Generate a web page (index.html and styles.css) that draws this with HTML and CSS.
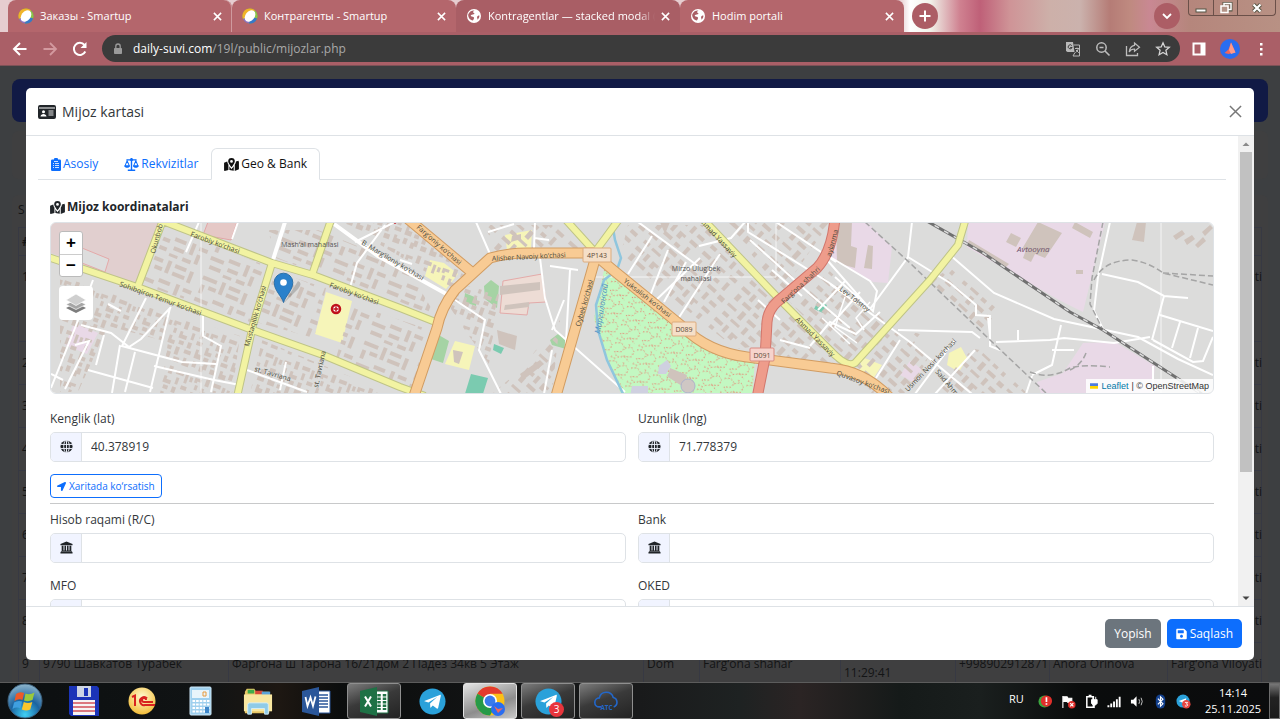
FILE: index.html
```html
<!DOCTYPE html>
<html lang="uz">
<head>
  <meta charset="UTF-8" />
  <meta name="viewport" content="width=device-width, initial-scale=1.0"/>
  <title>Mijoz kartasi</title>
  <link rel="stylesheet" href="styles.css">
</head>
<body>

  <!-- shared icons -->
  <svg class="sprite" aria-hidden="true">
    <symbol id="i-x" viewBox="0 0 10 10"><path d="M1 1l8 8M9 1l-8 8" stroke="currentColor" stroke-width="1.700" fill="none"/></symbol>
    <symbol id="i-smartup" viewBox="0 0 16 16">
      <circle cx="8" cy="8" r="7.500" fill="#6ab04a"/>
      <path d="M1 11A7.500 7.500 0 0 1 8 .5c3 0 4 1 5 2L8 8z" fill="#f0b429"/>
      <path d="M13 2.500a7.500 7.500 0 0 1 2 8L8 8z" fill="#8bc34a"/>
      <path d="M15 10.500A7.500 7.500 0 0 1 7 15.500L8 8z" fill="#3778c8"/>
      <path d="M7 15.500A7.500 7.500 0 0 1 1 11l7-3z" fill="#8f6fc0"/>
      <ellipse cx="8" cy="8" rx="4.600" ry="6.400" transform="rotate(38 8 8)" fill="#fff"/>
    </symbol>
    <symbol id="i-earth" viewBox="0 0 16 16">
      <circle cx="8" cy="8" r="7" fill="#fff"/>
      <path d="M8.500 2.500c-1 .5-2 1.500-1 2.200 1.300.4 1.200 1.300.2 1.600-1.200.5-2.700.3-3 1.500.2 1 1.800.7 2.800 1.200 1.200.7.3 2-.6 3.500-3-.6-5-3-4.700-6C3 4 5.500 2.300 8.500 2.500zM13.400 7.500c-.8.2-2 .2-2.300 1.300-.3 1.200.6 1.600.4 2.900 1.400-1.200 2-2.500 1.900-4.200z" fill="#a95e65"/>
    </symbol>
    <symbol id="i-globe" viewBox="0 0 14 14">
      <circle cx="7" cy="7" r="6.500" fill="#212529"/>
      <path d="M.5 4.800h13M.5 9.200h13M7 .5v13" stroke="#f1f4ff" fill="none"/>
      <ellipse cx="7" cy="7" rx="3" ry="6.700" stroke="#f1f4ff" fill="none"/>
    </symbol>
    <symbol id="i-bank" viewBox="0 0 14 14">
      <path d="M7 .5l6.500 2.800v1.200H.5V3.300zM1.800 5.200h2v5h1V5.200h1.700v5h1V5.200h1.700v5h1V5.200h2v5.600H1.800zM.5 12.200l.8-1.200h11.400l.8 1.200v1.300H.5z" fill="#212529"/>
    </symbol>
    <symbol id="i-map" viewBox="0 0 16 14">
      <path d="M0 5l3.400-1.300c.1 1.300.7 2.500 1.300 3.700V13L.7 14 0 13.500zM16 4.200V12l-4.500 2V7.400c.7-1.200 1.300-2.500 1.300-3.500L15.400 3zM5.700 9c.8 1.200 1.200 1.800 2.300 3 1.100-1.200 1.600-1.800 2.400-3v4.800l-4.700-1z" fill="currentColor"/>
      <path d="M8 0a3.600 3.600 0 0 1 3.600 3.600C11.600 5.500 9.300 8.500 8 10 6.700 8.500 4.400 5.500 4.400 3.600A3.600 3.600 0 0 1 8 0zm0 2.200a1.500 1.500 0 1 0 0 3 1.500 1.500 0 0 0 0-3z" fill="currentColor" fill-rule="evenodd"/>
    </symbol>
    <symbol id="i-telegram" viewBox="0 0 28 28">
      <circle cx="14" cy="14" r="13.500" fill="#2aa1da"/>
      <path d="M5.500 13.500L21.500 7.200c.8-.3 1.300.2 1.100 1.100l-2.700 12.300c-.2.9-.8 1-1.500.6l-4.100-3-2 2c-.3.3-.5.3-.6-.2l-.2-4 7.300-6.600-9 5.700-4.200-1.300z" fill="#fff"/>
    </symbol>
  </svg>

  <header class="browser">
    <div class="tabstrip">
      <div class="btab">
        <svg class="favicon"><use href="#i-smartup"/></svg>
        <button class="btab-title">Заказы - Smartup</button>
        <button class="btab-close" aria-label="Close"><svg><use href="#i-x"/></svg></button>
      </div>
      <div class="btab">
        <svg class="favicon"><use href="#i-smartup"/></svg>
        <button class="btab-title">Контрагенты - Smartup</button>
        <button class="btab-close" aria-label="Close"><svg><use href="#i-x"/></svg></button>
      </div>
      <div class="btab current">
        <svg class="favicon"><use href="#i-earth"/></svg>
        <button class="btab-title">Kontragentlar — stacked modal (</button>
        <button class="btab-close" aria-label="Close"><svg><use href="#i-x"/></svg></button>
      </div>
      <div class="btab">
        <svg class="favicon"><use href="#i-earth"/></svg>
        <button class="btab-title">Hodim portali</button>
        <button class="btab-close" aria-label="Close"><svg><use href="#i-x"/></svg></button>
      </div>
      <button class="round" aria-label="New tab"><svg viewBox="0 0 12 12"><path d="M6 .5v11M.5 6h11" stroke="#fff" stroke-width="2"/></svg></button>
      <button class="round tab-search" aria-label="Search tabs"><svg viewBox="0 0 12 12"><path d="M2 4l4 4 4-4" stroke="#fff" stroke-width="1.800" fill="none"/></svg></button>
      <div class="winbtns">
        <button aria-label="Minimize"><svg viewBox="0 0 14 12"><rect x="2" y="7" width="10" height="3" fill="#fff" stroke="#554"/></svg></button>
        <button aria-label="Restore"><svg viewBox="0 0 14 12"><path d="M5 1h7v7H5z" fill="none" stroke="#554" stroke-width="3"/><path d="M5 1.500h7v6H5z" fill="none" stroke="#fff" stroke-width="1.500"/><path d="M2 4h7v6.500H2z" fill="#b49387" stroke="#fff" stroke-width="1.500"/></svg></button>
        <button class="wide" aria-label="Close window"><svg viewBox="0 0 14 12"><path d="M3.500 2.500l7 7M10.500 2.500l-7 7" stroke="#554" stroke-width="4"/><path d="M3.500 2.500l7 7M10.500 2.500l-7 7" stroke="#fff" stroke-width="2.200"/></svg></button>
      </div>
    </div>

    <div class="toolbar">
      <button class="nav" aria-label="Back"><svg viewBox="0 0 16 16"><path d="M14.500 8H2.500M8 2L2 8l6 6" stroke="#fff" stroke-width="2" fill="none"/></svg></button>
      <button class="nav" aria-label="Forward"><svg viewBox="0 0 16 16"><path d="M1.500 8h12M8 2l6 6-6 6" stroke="#d3999f" stroke-width="1.800" fill="none"/></svg></button>
      <button class="nav" aria-label="Reload"><svg viewBox="0 0 16 16"><path d="M13.300 10.500A6 6 0 1 1 12.500 4" stroke="#fff" stroke-width="2" fill="none"/><path d="M14.500 1v6h-6z" fill="#fff"/></svg></button>
      <div class="address">
        <svg class="lock" viewBox="0 0 10 12"><path d="M1.500 5.500h7v5h-7z" fill="#9a9a9a" stroke="#9a9a9a"/><path d="M2.800 5V3.200a2.200 2.200 0 0 1 4.400 0V5" fill="none" stroke="#9a9a9a" stroke-width="1.300"/></svg>
        <div class="url" role="textbox" aria-label="Address"><b>daily-suvi.com</b>/19l/public/mijozlar.php</div>
        <button aria-label="Translate"><svg viewBox="0 0 16 16"><path d="M1 1h7l1.500 10H2.500L1 10z" fill="#b9b9b9"/><path d="M8.500 4H14.500v11H8l2-3.500" fill="none" stroke="#b9b9b9"/><path d="M10 7.500h4M12 6.500v1M13.300 7.500c-.4 2-1.500 3.300-2.800 4M11 9l2.800 2.800" stroke="#b9b9b9" fill="none"/><path d="M6.800 4.600a2 2 0 1 0 .3 1.900H5.200" stroke="#3b3b3b" fill="none"/></svg></button>
        <button aria-label="Zoom"><svg viewBox="0 0 16 16"><circle cx="6.500" cy="6.500" r="4.700" fill="none" stroke="#bdbdbd" stroke-width="1.500"/><path d="M10 10l4.500 4.500M4.500 6.500h4" stroke="#bdbdbd" stroke-width="1.600"/></svg></button>
        <button aria-label="Share"><svg viewBox="0 0 16 16"><path d="M1.500 5v9.500h11V12" fill="none" stroke="#bdbdbd" stroke-width="1.300"/><path d="M9.500 2l5 4.300-5 4V8C7 8 5.200 9 4.200 11 4.500 7.500 6.500 4.800 9.500 4.300z" fill="none" stroke="#bdbdbd" stroke-width="1.200"/></svg></button>
        <button aria-label="Bookmark"><svg viewBox="0 0 16 16"><path d="M8 1.800l1.800 4.100 4.500.4-3.400 3 1 4.400L8 11.400l-3.900 2.300 1-4.400-3.400-3 4.500-.4z" fill="none" stroke="#d5d5d5" stroke-width="1.300"/></svg></button>
      </div>
      <button class="ext" aria-label="Side panel"><svg viewBox="0 0 14 14"><path d="M.5.500h13v13H.5zM2.500 2.500v9h6v-9z" fill="#fff" fill-rule="evenodd"/></svg></button>
      <button class="ext avatar" aria-label="Profile"><svg viewBox="0 0 20 20"><circle cx="10" cy="10" r="10" fill="#2a6df0"/><path d="M11 3.500l4.500 10-4 .5-3 1-4-1 4-3.500z" fill="#f2665a"/><path d="M11 3.500L9 11l2 4 4.500-1.500z" fill="#ff9a8a"/></svg></button>
      <button class="ext" aria-label="Menu"><svg viewBox="0 0 14 14"><path d="M6 1h2.500v2.500H6zM6 6h2.500v2.500H6zM6 11h2.500v2.500H6z" fill="#fff"/></svg></button>
    </div>
  </header>

  <main class="page">
    <div class="navbar"></div>
    <div class="filters"></div>
    <div class="list">
      <p>S</p>
      <table>
        <colgroup><col class="c-n"><col class="c-name"><col class="c-addr"><col class="c-type"><col class="c-city"><col class="c-date"><col class="c-phone"><col class="c-agent"><col></colgroup>
        <thead><tr><th>#</th><th></th><th></th><th></th><th></th><th></th><th></th><th></th><th></th></tr></thead>
        <tbody>
          <tr class="tall"><td>1</td><td></td><td></td><td></td><td></td><td></td><td></td><td></td><td>Farg‘ona Viloyati</td></tr>
          <tr><td>2</td><td></td><td></td><td></td><td></td><td></td><td></td><td></td><td>Farg‘ona Viloyati</td></tr>
          <tr><td>3</td><td></td><td></td><td></td><td></td><td></td><td></td><td></td><td>Farg‘ona Viloyati</td></tr>
          <tr><td>4</td><td></td><td></td><td></td><td></td><td></td><td></td><td></td><td>Farg‘ona Viloyati</td></tr>
          <tr><td>5</td><td></td><td></td><td></td><td></td><td></td><td></td><td></td><td>Farg‘ona Viloyati</td></tr>
          <tr><td>6</td><td></td><td></td><td></td><td></td><td></td><td></td><td></td><td>Farg‘ona Viloyati</td></tr>
          <tr><td>7</td><td></td><td></td><td></td><td></td><td></td><td></td><td></td><td>Farg‘ona Viloyati</td></tr>
          <tr><td>8</td><td></td><td></td><td></td><td></td><td></td><td></td><td></td><td>Farg‘ona Viloyati</td></tr>
          <tr><td>9</td><td>9790 Шавкатов Турабек</td><td>Фаргона ш Тарона 16/21дом 2 Падез 34кв 5 Этаж</td><td>Dom</td><td>Farg‘ona shahar</td><td>2025-11-25 11:29:41</td><td>+998902912871</td><td>Anora Orinova</td><td>Farg‘ona Viloyati</td></tr>
        </tbody>
      </table>
    </div>

    <div class="overlay">
      <section class="modal" role="dialog" aria-labelledby="modal-title">
        <div class="modal-header">
          <svg class="id-card" viewBox="0 0 18 14"><path d="M2 0h14a2 2 0 0 1 2 2v10a2 2 0 0 1-2 2H2a2 2 0 0 1-2-2V2a2 2 0 0 1 2-2zM1 2.500v1h16v-1z" fill="#212529" fill-rule="evenodd"/><circle cx="5.500" cy="6.700" r="1.500" fill="#fff"/><path d="M2.500 11.500c.2-3.500 5.800-3.500 6 0z" fill="#fff"/><path d="M10.500 6h5M10.500 8h5M10.500 10h5" stroke="#fff" stroke-width=".9"/></svg>
          <h1 id="modal-title">Mijoz kartasi</h1>
          <button class="close" aria-label="Yopish"><svg viewBox="0 0 14 14"><path d="M1 1l12 12M13 1L1 13" stroke="#777" stroke-width="1.600"/></svg></button>
        </div>

        <div class="modal-body">
          <div class="content">
            <nav class="tabs">
              <a href="#asosiy"><svg class="ic-clip" viewBox="0 0 10 13"><path d="M1.300 1.500H3a2 2 0 0 1 4 0h1.700A1.300 1.300 0 0 1 10 2.800v8.900A1.300 1.300 0 0 1 8.700 13H1.300A1.300 1.300 0 0 1 0 11.700V2.800a1.300 1.300 0 0 1 1.300-1.300z" fill="currentColor"/><path d="M2 5.500h1M4 5.500h4M2 7.500h1M4 7.500h4M2 9.500h1M4 9.500h4M3 3.500h4" stroke="#fff" stroke-width=".8"/></svg>Asosiy</a>
              <a href="#rekvizitlar"><svg class="ic-wide" viewBox="0 0 16 14"><path d="M8 0v13M2.500 2h11M4 13.200h8" stroke="currentColor" stroke-width="1.500"/><circle cx="8" cy="2" r="1.600" fill="currentColor"/><path d="M3.300 3L1 8.500h4.700zM12.700 3l-2.400 5.500H15z" fill="none" stroke="currentColor" stroke-width="1.100"/><path d="M.3 8h6c0 3.500-6 3.500-6 0zM9.700 8h6c0 3.500-6 3.500-6 0z" fill="currentColor"/></svg>Rekvizitlar</a>
              <a href="#geo" class="active"><svg class="ic-wide"><use href="#i-map"/></svg>Geo &amp; Bank</a>
            </nav>

            <form class="pane" id="geo">
              <h2><svg class="ic-wide"><use href="#i-map"/></svg>Mijoz koordinatalari</h2>

              <div class="map">
                <svg class="tiles" viewBox="51 222 1162 172" preserveAspectRatio="xMidYMid slice" aria-label="Farg‘ona">
                  <defs>
                    <pattern id="blocks" width="58" height="44" patternUnits="userSpaceOnUse" patternTransform="rotate(22)">
                      <path class="house" d="M2 3h15v4H2zM22 2h4v13h-4zM30 3h12v4H30zM46 4h4v12h-4zM3 12h4v9H3zM11 11h8v4h-8zM30 11h13v4H30zM2 26h14v4H2zM20 22h12v4H20zM38 21h4v12h-4zM46 22h9v4h-9zM4 35h12v4H4zM22 31h11v4H22zM20 39h9v3h-9zM46 30h4v10h-4zM34 38h9v4h-9z"/>
                    </pattern>
                    <pattern id="houses" width="47" height="39" patternUnits="userSpaceOnUse" patternTransform="rotate(-70)">
                      <path class="house" d="M1 1h6v3h3v4H4V5H1zM12 2h4v5h-4zM18 1h8v3h-4v4h-4zM29 3h5v3h-5zM36 1h5v7h-3V4h-2zM2 12h5v6H2zM9 11h8v4H9zM20 12h4v5h-4zM26 10h7v3h-3v5h-4zM36 12h8v4h-8zM1 22h8v3H6v4H1zM13 20h4v7h-4zM19 21h6v4h-6zM28 22h7v3h-7zM38 20h4v8h-4zM3 32h6v4H3zM12 31h9v3h-4v4h-5zM25 29h4v6h-4zM32 30h9v3h-9zM35 35h5v3h-5z"/>
                    </pattern>
                    <pattern id="yards" width="53" height="41" patternUnits="userSpaceOnUse" patternTransform="rotate(42)">
                      <path class="house" d="M2 2h10v4H2zM15 1h4v8h-4zM24 3h8v3h-3v4h-5zM38 2h9v4h-9zM3 11h5v7H3zM13 13h10v4H13zM28 14h6v4h-6zM40 10h4v9h-4zM2 24h11v3H2zM18 21h5v9h-5zM28 23h10v4H28zM43 24h7v5h-7zM4 33h7v4H4zM15 34h11v3H15zM31 31h4v8h-4zM40 34h8v4h-8z"/>
                    </pattern>
                    <pattern id="paths" width="23" height="19" patternUnits="userSpaceOnUse" patternTransform="rotate(18)">
                      <path d="M1 3l6-2 5 4-3 5-6 1M12 5l6-3 4 4-2 6-7 1M3 11l4 5 7-3 6 4M1 17l5 1M15 0l1 3" fill="none" stroke="#e8806f" stroke-width="1" stroke-dasharray="1.500 2"/>
                    </pattern>
                  </defs>
                  <rect x="40" y="212" width="1190" height="192" fill="#dcdcdb"/>

                  <!-- land use -->
                  <g>
                    <path d="M40 222h122l-24 63-98-36z" fill="#e1cfcf"/>
                    <path d="M82 248l27 11-4 13-23-9z" fill="#ddd" stroke="#e4a9a9"/>
                    <path d="M208 222h29l-6 18-28-5z" fill="#e5c8c6" stroke="#e2a5a5"/>
                    <path d="M74 323l24 10-11 21-22-9zM968 222h137l-22 90-24-12-92-53zM830 222h37l25 25-4 36-15-1-43-25zM1037 382l26-9 20-30 32-1 40 24-3 30h-110zM900 375l10-14 12 8-9 13z" fill="#e9d9e7"/>
                    <path d="M326 292l26 9-10 42-27-9zM430 260l14 3 14 11-12 15-21-13zM505 235l27-5-1 18-24 2zM455 341l20 5-6 24-24-6zM862 357l20 8-9 14-14-6zM949 353l12-6 6 11-8 14-12-7z" fill="#f6f5b9"/>
                    <path d="M503 281l39-7 4 28-17 1-2 12-27-2z" fill="#eddcd5" stroke="#e3aaa9"/>
                    <path d="M604 270l12 4 66 54 35 26 38 7-3 36H622l-14-38-14-40z" fill="#c3f8c2"/>
                    <path d="M604 270l12 4 66 54 35 26 38 7-3 36H622l-14-38-14-40z" fill="url(#paths)"/>
                    <path d="M484 286l7-6 8 6-2 22-12-9zM465 293l12 5-1 8-12-4zM437 334l12 7-6 22-12-4zM550 340l8-6 8 5v10l-14-4z" fill="#a5d3a4"/>
                    <path d="M471 374l17 4-6 19h-18zM494 344l10 4-3 6-8-4zM818 301l9 4-4 8-9-4z" fill="#7bcbb0"/>
                  </g>

                  <!-- buildings -->
                  <g>
                    <path d="M168 228l104 40-22 54-108-38z" fill="url(#blocks)"/>
                    <path d="M268 230l50 0 88 36 30 50-160-58zM276 272l50 16-12 50-58-16zM352 304l78 26-16 58-78-30z" fill="url(#blocks)"/>
                    <path d="M60 276l180 60-8 58H160l8-52-60-16-30 66H60z" fill="url(#houses)"/>
                    <path d="M262 340l130 54H250zM345 222h60l64 54-16 12-108-64zM445 300l14-16 40 10-10 70-20-28z" fill="url(#houses)"/>
                    <path d="M485 225h70l30 26-90 0zM628 225h80l66 74-8 46-30 4-116-92zM725 222h105l-48 70z" fill="url(#yards)"/>
                    <path d="M772 320l20-10 60 60-50-6-36-6zM788 300l36-34 100 90-54 34-24-30z" fill="url(#yards)"/>
                    <path d="M905 330l24 26-20 38H870l50-60zM950 268l46 40-10 24-60-48zM980 350l48 44h-90l30-46zM520 370l40-50-8 74h-60z" fill="url(#yards)"/>
                    <path class="house" d="M1038 222l24 11-17 25-10-4-4 8-8-4 3-8-4-1zM1011 233l10 5-5 9-10-5zM1075 222l18 10-3 6-18-10zM836 222h16l-1 24 6 2-2 20-18-5zM868 245l5 1-1 23-8-1zM969 240l40 24-4 4-38-23zM1076 270h7v4h-7zM1137 222h9l-2 20-12-2zM497 330l20 6-2 14-16-6zM500 286l40-4v8l-40 5zM505 305l24-3v5l-25 3zM520 374l20-14 4 4-21 16zM670 370l17 6-4 10-16-10zM660 222h10l-5 12zM1173 236l9-6 3 4-9 6zM1184 240l8-5 3 4-8 6zM1195 245l8-8 3 4-8 7zM1202 232l8-7 3 3-8 8z"/>
                    <path class="house" d="M512 236l9-2v5l-10 3zM453 350l10 2-4 12-5-2z"/>
                  </g>

                  <!-- minor streets -->
                  <g fill="none" stroke="#fff" stroke-width="2">
                    <path d="M201 222v172M1161 222v172M585 277h191v-55" stroke-width="1" stroke="#f5f5f5"/>
                    <path d="M285 222l-13 41" stroke-width="4"/>
                    <path d="M238 222l-6 17M199 222l-13 30M93 280l-18 48-24 60M108 304l13 7M81 325l30 8 18 14 12-8 30-32M146 298l-24 48 60 16 34 2M170 308l-20 84M203 310v26l18 10-10 46M75 345l14-4-24 48M88 370l65 18M104 335l-8 30M154 366l60 14 26 5M51 374l12 6M120 345l-8 48M135 352l-10 40M247 370l60 22M286 362l-6 28M385 225l-28 38-8 28M395 222l-40 20"/>
                    <path d="M334 224l44 32 72 40" stroke-width="4"/>
                    <path d="M476 222l14 32M400 260l12 4M535 222l-1 26M488 232l26-8M534 238l15 2M540 258l5 40 10 32 70 62M455 300l30 20-6 30 22 44M570 270l-5 90M550 266l28 4M564 300l-12 30M552 350l-8 44"/>
                    <path d="M638 222l60 44M652 236l-24 38M668 250l-18 46M686 262l-22 40M745 222l-14 16-32 8M720 254l-44 68M700 258l-46 44M750 240l60 54 40 34M776 222l60 40M748 222v10l80 50 20 14"/>
                    <path d="M830 257l40 24 7 10-4 20-38-34M912 222l-4 35-38 52-42-48M908 257l42 26 26 22 0 10 14 1v30l10 4M950 255l44 38 60 26 84 18 40 22 35 16M830 284l80 58 62 52M860 292l-30 34M846 280l-28 30M880 312l-24 22-26-12-20 24M898 330l74 2 8 6M955 340l-40 54M975 350l-40 44M900 340l-24 38M996 342l54-2 14-2 50 5 36-6M1061 325l-9 40-20 10M1052 350h22M1110 222l-12 55-4 34 10 20M1102 274l36 8 26 14 24 2M1164 296l-12 44M1160 315l53 16M1180 322l-8 26M1198 328l-8 30M1153 340l40 22 10-1 10-24M1153 366v28M1032 376l-6 18M780 340l30 8M758 300l22 20M772 270l30 26M990 336l-2-18M1018 340v-10" />
                    <path d="M845 297l-10 30 22 16M870 302l-14 16 8 12M822 318l28 26" stroke-width="1.500"/>
                  </g>

                  <!-- water and rail -->
                  <path d="M611 216l4 24 6 18-4 12-13 10-8 25 2 25 9 30 18 38" fill="none" stroke="#8fc6de" stroke-width="2.500"/>
                  <g fill="none" stroke="#a5a5a5" stroke-width="1.500">
                    <path d="M865 222l45 41 80 77 57 54M1103 222l-11 56-2 26 13 26M1094 280q10-20 38-20 16 2 31 13l50 12M1163 273l50 3M1030 372q20 8 40-4 12-4 40-1M1070 370q12-6 16-17" stroke-dasharray="6 3"/>
                    <path d="M925 220l58 33 87 59 33 18 77 50 25 16" stroke="#707070" stroke-width="3"/>
                    <path d="M925 220l58 33 87 59 33 18 77 50 25 16" stroke="#ddd" stroke-width="1.500" stroke-dasharray="5 6"/>
                  </g>

                  <!-- main roads: casing then fill -->
                  <g fill="none" stroke-linejoin="round">
                    <g stroke="#bfc487" stroke-width="8">
                      <path d="M45 256l95 32 107 40 76 27 77 32 25 9M160 220l112 43 41 12 87 33 38 15M163 220l-25 66M331 220l-19 55M272 263l-19 62-16 72M566 220l29 32M620 218l-25 34M702 218l78 82 50 50q17 18 25 13l75-83 28-35 8-27"/>
                    </g>
                    <g stroke="#f2f3a2" stroke-width="6">
                      <path d="M45 256l95 32 107 40 76 27 77 32 25 9M160 220l112 43 41 12 87 33 38 15M163 220l-25 66M331 220l-19 55M272 263l-19 62-16 72M566 220l29 32M620 218l-25 34M702 218l78 82 50 50q17 18 25 13l75-83 28-35 8-27"/>
                    </g>
                    <path d="M408 219l67 56M414 396l23-68q4-20 18-38l35-32q18-5 37-5h66l20 17 70 57q25 25 64 30l83 11q35 3 60 30M596 256l-40 140" stroke="#d19c62" stroke-width="11"/>
                    <path d="M408 219l67 56M414 396l23-68q4-20 18-38l35-32q18-5 37-5h66l20 17 70 57q25 25 64 30l83 11q35 3 60 30M596 256l-40 140" stroke="#f8cb94" stroke-width="9"/>
                    <path d="M757 398l8-40 2-36q1-12 10-20l40-34q15-16 18-50" stroke="#d1766c" stroke-width="11"/>
                    <path d="M757 398l8-40 2-36q1-12 10-20l40-34q15-16 18-50" stroke="#ee9c8b" stroke-width="9"/>
                  </g>

                  <!-- park buildings -->
                  <path d="M659 366l8-6 4 6-5 8-8 0zM632 386h16v10h-18z" fill="#cfd0e0"/>
                  <path class="house" d="M670 368l17 7-5 11-14-9z"/>
                  <circle cx="688" cy="386" r="7" fill="#cfc7c4" stroke="#aeb2cc"/>

                  <!-- labels -->
                  <g class="lbl">
                    <text transform="translate(155 254) rotate(-75)">Okunbob</text>
                    <text transform="translate(190 236) rotate(20)">Farobiy ko‘chasi</text>
                    <text transform="translate(329 287) rotate(20)">Farobiy ko‘chasi</text>
                    <text transform="translate(119 286) rotate(20)">Sohibqiron Temur ko‘chasi</text>
                    <text transform="translate(249 347) rotate(-74)">Mustaqillik ko‘chasi</text>
                    <text transform="translate(361 244) rotate(31)">B. Marg‘iloniy ko‘chasi</text>
                    <text transform="translate(254 371) rotate(16)">st. Tavriana</text>
                    <text transform="translate(318 388) rotate(-78)">st. Tavriana</text>
                    <text transform="translate(416 228) rotate(41)">Farg‘oniy ko‘chasi</text>
                    <text transform="translate(492 261) rotate(-3)">Alisher Navoiy ko‘chasi</text>
                    <text transform="translate(580 327) rotate(-74)">Oybek ko‘chasi</text>
                    <text transform="translate(623 282) rotate(38)">Yuksalish ko‘chasi</text>
                    <text transform="translate(701 223) rotate(47)">hmad Yassaviy</text>
                    <text transform="translate(795 320) rotate(45)">Ahmad Yassaviy</text>
                    <text transform="translate(784 304) rotate(-43)">Farg‘ona shahri</text>
                    <text transform="translate(831 257) rotate(-75)">aylanma</text>
                    <text transform="translate(839 290) rotate(38)">Lev Tolstoy</text>
                    <text transform="translate(836 375) rotate(20)">Quvasoy ko‘chasi</text>
                    <text transform="translate(908 392) rotate(-46)">Usmon Nosir ko‘chasi</text>
                    <text transform="translate(935 372) rotate(50)">Said Ahmad</text>
                    <text class="place" x="281" y="247">Mash‘al mahallasi</text>
                    <text class="place" text-anchor="middle" x="696" y="271">Mirzo Ulug‘bek</text>
                    <text class="place" text-anchor="middle" x="696" y="281">mahallasi</text>
                    <text class="factory" x="1017" y="252">Avtooyna</text>
                    <text class="river" transform="translate(600 334) rotate(-81)">Маргилонсай</text>
                  </g>
                  <g class="shield">
                    <rect x="583" y="248" width="28" height="14" rx="1" fill="#f5dfc8" stroke="#dcab7c"/>
                    <text x="597" y="258">4P143</text>
                    <rect x="672" y="322" width="24" height="14" rx="1" fill="#f5dfc8" stroke="#dcab7c"/>
                    <text x="684" y="332">D089</text>
                    <rect x="750" y="348" width="24" height="13" rx="1" fill="#f6d3cc" stroke="#d98a80"/>
                    <text x="762" y="358">D091</text>
                  </g>
                  <circle cx="336" cy="309" r="4" fill="#fff" stroke="#c0111b" stroke-width="2.500"/>
                  <path d="M336 306.500v5M333.500 309h5" stroke="#c0111b" stroke-width="1.500"/>
                  <path d="M392 222h6l-3 2z" fill="#c0111b"/>

                  <!-- marker -->
                  <path d="M284 303l14-14q5-6 0-8z" fill="#000" opacity=".18"/>
                  <path d="M283.500 302.500c-1.500-6-9.300-12-9.300-20a9.300 9.300 0 0 1 18.600 0c0 8-7.800 14-9.300 20z" fill="#2a81cb" stroke="#2a6fa8"/>
                  <circle cx="283.500" cy="282.500" r="3.300" fill="#fff"/>
                </svg>

                <div class="map-controls">
                  <div class="zoom">
                    <button type="button" aria-label="Zoom in">+</button>
                    <button type="button" aria-label="Zoom out">−</button>
                  </div>
                  <button type="button" class="layers" aria-label="Layers"><svg viewBox="0 0 22 22"><path d="M11 11l10 5-10 5-10-5z" fill="#7d7d7d"/><path d="M11 7.500l10 5-10 5-10-5z" fill="#a5a5a5" stroke="#fff" stroke-width=".7"/><path d="M11 2l10 6-10 5.500L1 8z" fill="#cfcfcf" stroke="#fff" stroke-width=".7"/></svg></button>
                </div>
                <div class="attribution"><svg viewBox="0 0 12 8"><path fill="#4c7be1" d="M0 0h12v4H0z"/><path fill="#ffd500" d="M0 4h12v4H0z"/></svg><a href="#leaflet">Leaflet</a> | © OpenStreetMap</div>
              </div>

              <div class="grid">
                <div class="field">
                  <label for="lat">Kenglik (lat)</label>
                  <div class="group"><span><svg><use href="#i-globe"/></svg></span><input id="lat" type="text" value="40.378919"></div>
                </div>
                <div class="field">
                  <label for="lng">Uzunlik (lng)</label>
                  <div class="group"><span><svg><use href="#i-globe"/></svg></span><input id="lng" type="text" value="71.778379"></div>
                </div>
              </div>

              <button type="button" class="btn-outline"><svg viewBox="0 0 512 512"><path fill="currentColor" d="M444.520 3.520L28.740 195.420c-47.970 22.390-31.980 92.750 19.190 92.750h175.910v175.910c0 51.170 70.360 67.170 92.750 19.190l191.900-415.780c15.990-38.390-25.590-79.970-63.970-63.970z"/></svg>Xaritada ko‘rsatish</button>
              <hr>

              <div class="grid bank">
                <div class="field">
                  <label for="rc">Hisob raqami (R/C)</label>
                  <div class="group"><span><svg><use href="#i-bank"/></svg></span><input id="rc" type="text"></div>
                </div>
                <div class="field">
                  <label for="bank">Bank</label>
                  <div class="group"><span><svg><use href="#i-bank"/></svg></span><input id="bank" type="text"></div>
                </div>
                <div class="field">
                  <label for="mfo">MFO</label>
                  <div class="group"><span></span><input id="mfo" type="text"></div>
                </div>
                <div class="field">
                  <label for="oked">OKED</label>
                  <div class="group"><span></span><input id="oked" type="text"></div>
                </div>
              </div>
            </form>
          </div>

          <div class="scrollbar" aria-hidden="true">
            <svg viewBox="0 0 16 16"><path d="M4.500 10L8 6.500l3.500 3.500z" fill="#8a8a8a"/></svg>
            <div class="track"><div class="thumb"></div></div>
            <svg viewBox="0 0 16 16"><path d="M4.500 6.500L8 10l3.500-3.500z" fill="#444"/></svg>
          </div>
        </div>

        <div class="modal-footer">
          <button class="btn gray">Yopish</button>
          <button class="btn blue"><svg viewBox="0 0 448 512"><path fill="#fff" d="M433.941 129.941l-83.882-83.882A48 48 0 0 0 316.118 32H48C21.490 32 0 53.490 0 80v352c0 26.510 21.490 48 48 48h352c26.510 0 48-21.490 48-48V163.882a48 48 0 0 0-14.059-33.941zM224 416c-35.346 0-64-28.654-64-64 0-35.346 28.654-64 64-64s64 28.654 64 64c0 35.346-28.654 64-64 64zm96-304.520V212c0 6.627-5.373 12-12 12H76c-6.627 0-12-5.373-12-12V108c0-6.627 5.373-12 12-12h228.520c3.183 0 6.235 1.264 8.485 3.515l3.480 3.480A11.996 11.996 0 0 1 320 111.480z"/></svg>Saqlash</button>
        </div>
      </section>
    </div>
  </main>

  <footer class="taskbar">
    <button class="start" aria-label="Start"><svg viewBox="0 0 36 36">
      <defs><radialGradient id="orb" cx=".5" cy=".9" r=".9"><stop offset="0" stop-color="#3fd0f5"/><stop offset=".5" stop-color="#1b63a0"/><stop offset="1" stop-color="#8fb6cc"/></radialGradient></defs>
      <circle cx="18" cy="18" r="17" fill="url(#orb)" stroke="#3a5f7c"/>
      <path d="M9 11q4-3 8-1l-1.500 7q-4-2-8 1z" fill="#ee5a28"/>
      <path d="M18.500 10.500q4 2 9-1l-2 7.500q-4 2-8.500.5z" fill="#9bc93c"/>
      <path d="M7 19.500q4-2.500 8-1l-1.500 7q-4-2-8 .5z" fill="#3f9fe0"/>
      <path d="M16.800 19q4 2 8.500 0l-2 7.500q-4 2-8.500 0z" fill="#fcc62c"/>
    </svg></button>

    <button class="task" aria-label="Total Commander"><svg viewBox="0 0 30 30"><path d="M0 0h28l2 2v28H2l-2-2z" fill="#1b34b8"/><path d="M8 0h14v11H8z" fill="#cdd5e4"/><path d="M15 2h4v8h-4z" fill="#1b34b8"/><path d="M4 14h22v15H4z" fill="#f6f4f4"/><path d="M4 17h22M4 21h22M4 25h22" stroke="#d2505a" stroke-width="1.300"/></svg></button>
    <button class="task" aria-label="1C"><svg viewBox="0 0 30 30"><defs><radialGradient id="c1" cx=".5" cy=".35" r=".65"><stop offset="0" stop-color="#fffbd0"/><stop offset="1" stop-color="#f3bd3a"/></radialGradient></defs><circle cx="15" cy="15" r="13.500" fill="url(#c1)"/><path d="M5 11l3-1.500V20M20 12.500a4 4 0 1 0-2 6.500h10M19 14a2 2 0 1 0-2 2h9" fill="none" stroke="#d8231f" stroke-width="2"/></svg></button>
    <button class="task" aria-label="Calculator"><svg viewBox="0 0 30 30"><rect x="5" y="1" width="21" height="28" rx="1" fill="#9fd0ee" stroke="#cfe9f8"/><rect x="7" y="4" width="17" height="8" fill="#e9f5fb"/><path d="M18 6h3v4h-3z" fill="none" stroke="#e79a3c"/><path d="M7.500 15h17M7.500 18.500h17M7.500 22h17M7.500 25.500h17" stroke="#fff" stroke-width="2.200" stroke-dasharray="2.600 1"/><path d="M20 21h4v6h-4z" fill="#3f87c9"/></svg></button>
    <button class="task" aria-label="Explorer"><svg viewBox="0 0 32 30"><path d="M2 5l2-3h8l2 3h14v23H2z" fill="#e9c765"/><path d="M5 3h7v4H5z" fill="#3fae4c"/><path d="M13 4h8v4h-8z" fill="#d84a3a"/><path d="M20 5h9v4h-9z" fill="#5ba3d8"/><path d="M1 8h30v18H1z" fill="#f9e7a0"/><path d="M5 29V19q0-2 2-2h18q2 0 2 2v10h-4v-6H9v6z" fill="#8fcbe8" stroke="#d3edf8"/></svg></button>
    <button class="task" aria-label="Word"><svg viewBox="0 0 30 30"><path d="M14 5h15v22H14z" fill="#fff" stroke="#2b579a"/><path d="M18 9h9M18 12h9M18 15h9M18 18h9M18 21h9" stroke="#2b579a" stroke-width="1.300"/><path d="M1 5l17-4v29L1 26z" fill="#2b579a"/><path d="M4.500 11l2 9 3-8.500 2.500 8.500 2.500-9.500" fill="none" stroke="#fff" stroke-width="1.800"/></svg></button>
    <button class="task open" aria-label="Excel"><svg viewBox="0 0 30 30"><path d="M14 5h15v22H14z" fill="#fff" stroke="#217346"/><path d="M20 8v16M25.500 8v16" stroke="#217346" stroke-width="3.500" stroke-dasharray="2.500 1"/><path d="M1 5l17-4v29L1 26z" fill="#1e7145"/><path d="M6 10.500l6 10M12 10.500l-6 10" fill="none" stroke="#fff" stroke-width="2"/></svg></button>
    <button class="task" aria-label="Telegram"><svg class="small"><use href="#i-telegram"/></svg></button>
    <button class="task open lit" aria-label="Chrome"><svg viewBox="0 0 30 30">
      <circle cx="15" cy="15" r="14.500" fill="#fbc116"/>
      <path d="M15 15L2.400 7.700A14.500 14.500 0 0 1 27.600 7.700H15z" fill="#e33b2e"/>
      <path d="M2.400 7.700A14.500 14.500 0 0 0 15 29.500l6-10.900L15 15z" fill="#269a48"/>
      <circle cx="15" cy="15" r="7" fill="#fff"/><circle cx="15" cy="15" r="5.400" fill="#3b7bea"/>
      <circle cx="23" cy="23" r="7" fill="#2a6df0"/><path d="M19 20l4 7 5-5-5 1z" fill="#f2665a"/></svg></button>
    <button class="task open" aria-label="Telegram"><svg class="small"><use href="#i-telegram"/></svg><span class="count">3</span></button>
    <button class="task open" aria-label="ATC"><svg class="small" viewBox="0 0 30 30"><path d="M9 21H7a5 5 0 0 1 0-10 8 8 0 0 1 15.500-.5A5.500 5.500 0 0 1 23 21" fill="none" stroke="#2367c9" stroke-width="1.800"/><text x="15" y="24" text-anchor="middle" class="atc">ATC</text></svg></button>

    <div class="tray">
      <span class="lang">RU</span>
      <svg viewBox="0 0 16 16"><circle cx="7" cy="8" r="6.500" fill="#3ba63f"/><circle cx="9" cy="7.500" r="6" fill="#e02f2b"/><path d="M9 3.500v5M9 9.800v1.600" stroke="#fff" stroke-width="1.800"/></svg>
      <svg viewBox="0 0 16 16"><path d="M2 2v13M2.500 3h4l1 1.500h4V9h-4l-1-1h-4z" stroke="#fff" stroke-width="1.200" fill="#fff"/><circle cx="11.500" cy="11.500" r="4" fill="#e02f2b"/><path d="M9.800 9.800l3.400 3.400M13.200 9.800l-3.400 3.400" stroke="#fff" stroke-width="1.300"/></svg>
      <svg viewBox="0 0 16 16"><path d="M3 3h7v11H3zM5 1.500h3" fill="none" stroke="#fff" stroke-width="1.600"/><path d="M8 6h6v4l-2 2h-2l-2-2zM9.500 3v3M12.500 3v3M11 12v3" fill="#fff" stroke="#fff"/></svg>
      <svg viewBox="0 0 16 16"><path d="M1.500 14v-2M4.500 14v-4M7.500 14V8M10.500 14V5.500M13.500 14V3" stroke="#fff" stroke-width="2"/></svg>
      <svg viewBox="0 0 16 16"><path d="M1 6h2.500L7 2.500v11L3.500 10H1z" fill="#fff"/><path d="M9.500 5.500q1.500 2.500 0 5M11.800 4q2.500 4 0 8" fill="none" stroke="#ccc"/></svg>
      <svg viewBox="0 0 16 16"><rect x="3" y=".5" width="10" height="15" rx="5" fill="#123f8c"/><path d="M5.200 5l5.400 5.500L8 13V3l2.600 2.500L5.200 11" fill="none" stroke="#fff" stroke-width="1.200"/></svg>
      <svg viewBox="0 0 16 16"><circle cx="7.500" cy="7.500" r="7" fill="#2aa1da"/><path d="M3 7.500l8-3-1.500 6z" fill="#fff"/><circle cx="11" cy="11" r="4.500" fill="#e8453f"/><path d="M9.500 9h3l-1.500 1.800q1.700 0 1.500 1.300-.5 1.200-3 .6" stroke="#fff" fill="none" stroke-width=".9"/></svg>
      <div class="clock"><span>14:14</span><span>25.11.2025</span></div>
      <button class="desktop" aria-label="Show desktop"></button>
    </div>
  </footer>

</body>
</html>
```

FILE: styles.css
```css
* {
  box-sizing: border-box;
}

body {
  margin: 0;
  height: 100vh;
  display: flex;
  flex-direction: column;
  overflow: hidden;
  font-family: "Open Sans", "Noto Sans", sans-serif;
  font-size: 12px;
  line-height: 18px;
  color: #212529;
}

button,
input {
  font: inherit;
  color: inherit;
  border: 0;
  padding: 0;
  background: none;
}

svg {
  display: block;
  flex: none;
}

.sprite {
  position: absolute;
  width: 0;
  height: 0;
}

/* browser */
.tabstrip {
  display: flex;
  align-items: center;
  height: 32px;
  padding-left: 8px;
  background: linear-gradient(90deg, #e6cdd0 0, #e6cdd0 900px, #fff 910px, #f1f3ea 930px, #cf8190 960px, #bf6078 980px, #cf9497 1010px, #cdb0a9 1050px, #cbb2ad 1080px, #b57c76 1110px, #bf8a80 1130px, #c98893 1150px, #b5867c 1190px, #b89184);
}

.btab {
  flex: 0 1 224px;
  min-width: 0;
  height: 32px;
  display: flex;
  align-items: center;
  padding: 0 10px;
  border-radius: 8px 8px 0 0;
  background: #b4666c;
  color: #fff;
}

.btab:first-child {
  box-shadow: inset -1px 0 #cf9a9e;
}

.btab.current {
  background: #a95e65;
}

.favicon {
  width: 16px;
  height: 16px;
}

.btab-title {
  flex: 1;
  min-width: 0;
  margin-left: 6px;
  overflow: hidden;
  white-space: nowrap;
  text-align: left;
  font-size: 11px;
}

.current .btab-title {
  -webkit-mask-image: linear-gradient(90deg, #000 90%, transparent);
  mask-image: linear-gradient(90deg, #000 90%, transparent);
}

.btab-close {
  margin-left: 4px;
  padding: 3px 0 3px 2px;
}

.btab-close svg {
  width: 9px;
  height: 9px;
}

.round {
  display: grid;
  place-items: center;
  width: 26px;
  height: 26px;
  margin-left: 8px;
  border-radius: 50%;
  background: #ac5d65;
}

.round svg {
  width: 12px;
  height: 12px;
}

.tab-search {
  margin-left: auto;
  margin-right: 8px;
}

.winbtns {
  display: flex;
  align-self: flex-start;
  height: 16px;
  margin-right: 4px;
  border: 1px solid #6b5049;
  border-top: 0;
  border-radius: 0 0 4px 4px;
}

.winbtns button {
  display: grid;
  place-items: center;
  width: 24px;
}

.winbtns button + button {
  border-left: 1px solid #6b5049;
}

.winbtns .wide {
  width: 38px;
}

.winbtns svg {
  width: 14px;
  height: 12px;
}

.toolbar {
  display: flex;
  align-items: center;
  height: 34px;
  padding: 0 12px;
  background: #aa5f67;
  border-bottom: 1px solid #7d5257;
}

.nav {
  padding: 0 14px 0 0;
}

.nav svg {
  width: 16px;
  height: 16px;
}

.address {
  flex: 1;
  display: flex;
  align-items: center;
  height: 27px;
  margin: 0 12px 0 0;
  padding: 0 9px 0 11px;
  border-radius: 14px;
  background: #3b3b3b;
}

.lock {
  width: 10px;
  height: 12px;
}

.url {
  flex: 1;
  margin-left: 10px;
  color: #a9a9a9;
}

.url b {
  font-weight: normal;
  color: #fff;
}

.address button {
  margin-left: 14px;
}

.address button svg {
  width: 16px;
  height: 16px;
}

.ext svg {
  width: 14px;
  height: 14px;
}

.avatar {
  margin: 0 14px;
}

.avatar svg {
  width: 20px;
  height: 20px;
}

/* dimmed page */
.page {
  position: relative;
  flex: 1;
  min-height: 0;
  overflow: hidden;
  padding: 13px 12px 0;
  background: #3d3f41;
  color: #131415;
}

.navbar {
  height: 43px;
  border-radius: 8px;
  background: #111a45;
}

.filters {
  height: 48px;
  margin-top: 9px;
  border-radius: 6px;
  background: #3f3f40;
}

.list {
  margin-top: 16px;
  padding: 6px;
  border-radius: 6px;
  background: #3f3f40;
}

.list p {
  margin: 0 0 8px;
}

.list table {
  width: 100%;
  table-layout: fixed;
  border-collapse: collapse;
}

.list th,
.list td {
  height: 43px;
  padding: 0 3px;
  border: 1px solid #373943;
  text-align: left;
  white-space: nowrap;
}

.list th {
  height: 28px;
}

.list td:nth-child(6) {
  white-space: normal;
}

.list .tall td {
  height: 86px;
  padding-top: 12px;
  vertical-align: top;
}

.c-n { width: 21px; }
.c-name { width: 189px; }
.c-addr { width: 415px; }
.c-type { width: 56px; }
.c-city { width: 141px; }
.c-date { width: 115px; }
.c-phone { width: 94px; }
.c-agent { width: 118px; }

/* modal */
.overlay {
  position: absolute;
  inset: 0;
  padding: 22px 26px;
}

.modal {
  display: flex;
  flex-direction: column;
  height: 100%;
  border-radius: 5px;
  background: #fff;
  color: #33373b;
  overflow: hidden;
}

.modal-header {
  display: flex;
  align-items: center;
  height: 48px;
  padding: 0 12px;
  border-bottom: 1px solid #dee2e6;
}

.id-card {
  width: 18px;
  height: 14px;
}

.modal-header h1 {
  flex: 1;
  margin: 0 0 0 6px;
  font-size: 14px;
  font-weight: normal;
}

.close svg {
  width: 13px;
  height: 13px;
}

.modal-body {
  flex: 1;
  min-height: 0;
  display: flex;
}

.content {
  flex: 1;
  min-width: 0;
  overflow: hidden;
  padding: 12px 12px 0;
}

.tabs {
  display: flex;
  height: 32px;
  border-bottom: 1px solid #dee2e6;
}

.tabs a {
  display: flex;
  align-items: center;
  gap: 2px;
  height: 32px;
  padding: 0 12px;
  border: 1px solid transparent;
  border-radius: 6px 6px 0 0;
  color: #0d6efd;
  text-decoration: none;
}

.tabs .active {
  border-color: #dee2e6;
  border-bottom-color: #fff;
  background: #fff;
  color: #111;
}

.ic-clip {
  width: 10px;
  height: 13px;
}

.ic-wide {
  width: 15px;
  height: 13px;
}

.pane {
  padding: 18px 12px 0;
}

.pane h2 {
  display: flex;
  align-items: center;
  gap: 2px;
  margin: 0 0 6px;
  font-size: 12px;
  font-weight: bold;
  color: #212529;
}

.map {
  position: relative;
  height: 172px;
  border: 1px solid #dee2e6;
  border-radius: 6px;
  overflow: hidden;
}

.tiles {
  width: 100%;
  height: 100%;
}

.house {
  fill: #cfc3bc;
}

.lbl text {
  font-size: 7px;
  fill: #4a4a3c;
}

.lbl .place {
  fill: #555;
}

.lbl .factory {
  font-size: 8px;
  font-style: italic;
  fill: #6d5069;
}

.lbl .river {
  font-size: 8px;
  font-style: italic;
  fill: #4c8fc4;
}

.shield text {
  font-size: 7px;
  text-anchor: middle;
  fill: #5d4a38;
}

.map-controls {
  position: absolute;
  top: 8px;
  left: 8px;
  display: grid;
  gap: 9px;
}

.zoom {
  width: 24px;
  border-radius: 3px;
  border: 1px solid #bbb;
  background: #fff;
}

.zoom button {
  display: block;
  width: 100%;
  height: 22px;
  font: bold 17px/22px "Liberation Sans", sans-serif;
  color: #000;
}

.zoom button + button {
  border-top: 1px solid #ccc;
}

.layers {
  display: grid;
  place-items: center;
  width: 34px;
  height: 34px;
  border-radius: 4px;
  background: #fff;
}

.layers svg {
  width: 22px;
  height: 22px;
}

.attribution {
  position: absolute;
  right: 0;
  bottom: 0;
  display: flex;
  align-items: center;
  gap: 3px;
  padding: 0 4px;
  background: rgba(255, 255, 255, 0.85);
  font: 9px/14px "Liberation Sans", sans-serif;
  color: #333;
}

.attribution svg {
  width: 8px;
  height: 6px;
}

.attribution a {
  color: #0078a8;
  text-decoration: none;
}

.grid {
  display: grid;
  grid-template-columns: 1fr 1fr;
  gap: 14px 12px;
  margin-top: 16px;
}

.field label {
  display: block;
  margin-bottom: 4px;
}

.group {
  display: flex;
  height: 30px;
  border: 1px solid #dee2e6;
  border-radius: 5px;
  overflow: hidden;
}

.group span {
  width: 31px;
  padding-top: 7px;
  border-right: 1px solid #dee2e6;
  background: #f1f4ff;
}

.group svg {
  width: 13px;
  height: 13px;
  margin: 0 auto;
}

.group input {
  flex: 1;
  min-width: 0;
  padding: 0 9px;
  outline: 0;
}

.btn-outline {
  display: flex;
  align-items: center;
  gap: 3px;
  height: 24px;
  margin-top: 12px;
  padding: 0 6px;
  border: 1px solid #0d6efd;
  border-radius: 4px;
  color: #0d6efd;
  font-size: 10px;
}

.btn-outline svg {
  width: 9px;
  height: 9px;
}

hr {
  margin: 5px 0 0;
  border: 0;
  border-top: 1px solid #c8c9ca;
}

.bank {
  margin-top: 7px;
}

.scrollbar {
  display: flex;
  flex-direction: column;
  width: 16px;
  background: #f1f1f1;
}

.scrollbar svg {
  width: 16px;
  height: 16px;
}

.track {
  flex: 1;
}

.thumb {
  height: 73%;
  margin: 0 2px;
  background: #c1c1c1;
}

.modal-footer {
  display: flex;
  justify-content: flex-end;
  gap: 6px;
  padding: 12px;
  border-top: 1px solid #dee2e6;
}

.btn {
  display: flex;
  align-items: center;
  gap: 3px;
  height: 29px;
  padding: 0 9px;
  border-radius: 5px;
  color: #fff;
}

.btn svg {
  width: 11px;
  height: 12px;
}

.gray {
  background: #6c757d;
}

.blue {
  background: #0d6efd;
}

/* taskbar */
.taskbar {
  display: flex;
  align-items: center;
  gap: 4px;
  height: 37px;
  border-top: 1px solid #5c5c5c;
  background: linear-gradient(90deg, #0c0f10 0, #101314 200px, #1d1712 280px, #0b0d0d 340px, #191a1b 640px, #1e2222 740px, #2b2424 800px, #151a19 900px, #1a1f1e 980px, #0a0c0c 1080px, #0b0c0d);
}

.start {
  width: 53px;
  padding-left: 7px;
}

.start svg {
  width: 36px;
  height: 36px;
}

.task {
  position: relative;
  display: grid;
  place-items: center;
  width: 54px;
  height: 36px;
  border: 1px solid transparent;
  border-radius: 3px;
}

.task svg {
  width: 30px;
  height: 30px;
}

.task .small {
  width: 27px;
  height: 27px;
}

.open {
  border-color: #8f8f8f;
  background: linear-gradient(160deg, #7c7c7c, #3a3a3a 45%, #232323);
}

.lit {
  border-color: #e3e3e3;
  background: linear-gradient(160deg, #e4e4e4, #8d8d8d 60%, #c9c9c9);
}

.count {
  position: absolute;
  right: 10px;
  bottom: 1px;
  width: 15px;
  border-radius: 8px;
  background: #e8353c;
  color: #fff;
  font-size: 10px;
  line-height: 15px;
  text-align: center;
}

.atc {
  font-size: 7px;
  font-weight: bold;
  fill: #2367c9;
}

.tray {
  display: flex;
  align-items: center;
  gap: 8px;
  height: 36px;
  margin-left: auto;
  color: #fff;
  font-size: 11px;
  line-height: 16px;
}

.tray svg {
  width: 15px;
  height: 15px;
}

.lang {
  padding: 0 6px 4px 0;
}

.clock {
  display: grid;
  margin-left: 6px;
  text-align: center;
}

.desktop {
  align-self: stretch;
  width: 11px;
  border: 1px solid #6d6d6d;
  background: linear-gradient(#777, #222 40%, #1a1a1a);
}
```
